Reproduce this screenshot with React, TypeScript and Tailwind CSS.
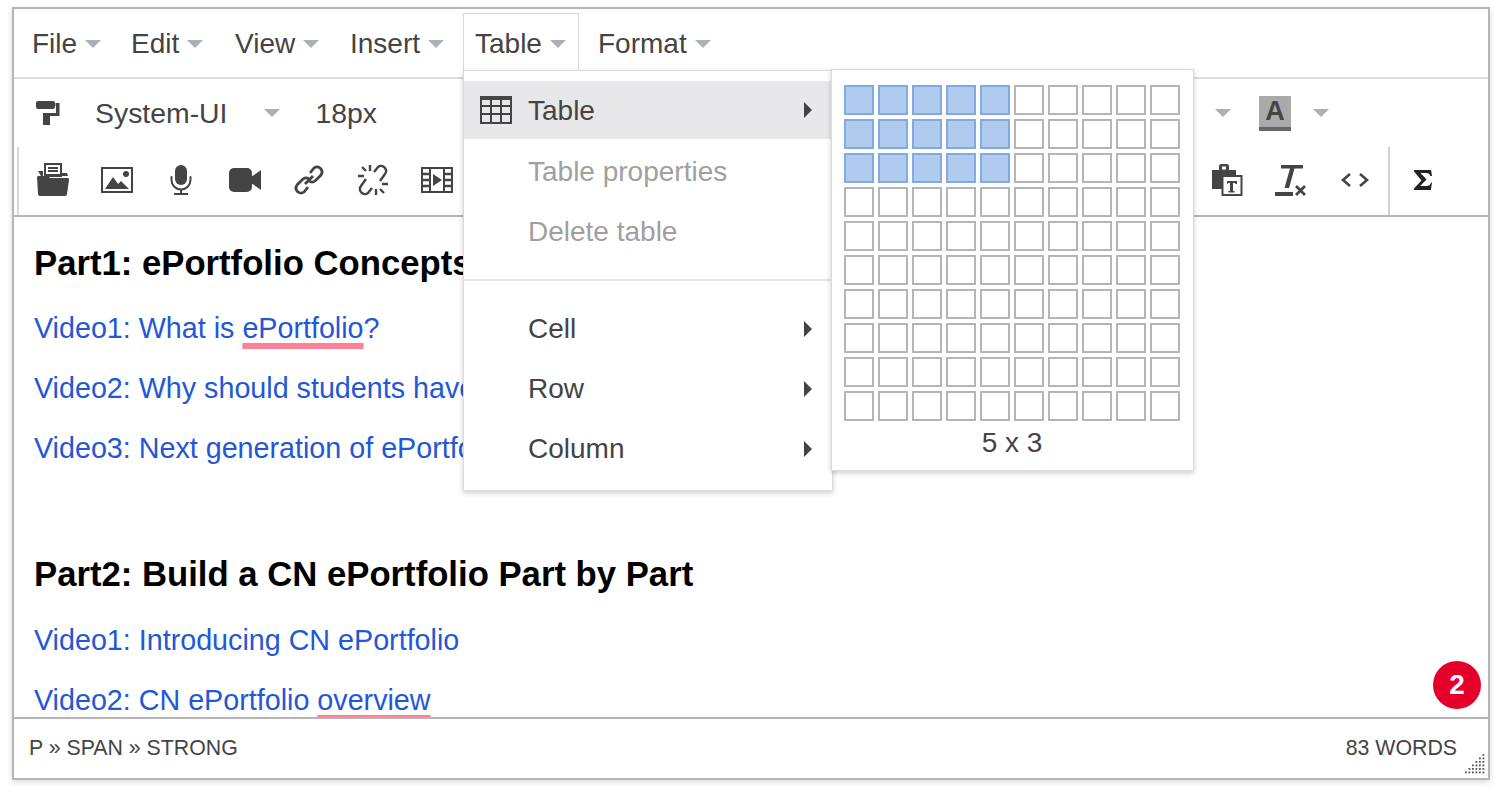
import React from "react";

const C = "#444444";
const font = { fontFamily: '"Liberation Sans", Arial, sans-serif' };

function Caret({ className = "" }: { className?: string }) {
  return (
    <svg width="16" height="8" viewBox="0 0 16 8" className={"shrink-0 " + className}>
      <path d="M0 0H16L8 8Z" fill="#a9b0b8" />
    </svg>
  );
}

function Arrow() {
  return (
    <svg width="8" height="16" viewBox="0 0 8 16" className="shrink-0">
      <path d="M0 0L8 8L0 16Z" fill="#444444" />
    </svg>
  );
}

function MenuBtn({ label, active, width }: { label: string; active?: boolean; width: string }) {
  return (
    <div
      className={
        "flex h-[64px] shrink-0 items-center gap-[8px] border-x border-t pb-[4px] pl-[11px] mr-[7px] " +
        width +
        " " +
        (active ? "border-[#d5d9dd] bg-white" : "border-transparent")
      }
    >
      <span>{label}</span>
      <Caret />
    </div>
  );
}

const Folder = () => (
  <svg width="34" height="34" viewBox="0 0 34 34">
    <path d="M9 1h16v11H9z" fill="none" stroke={C} strokeWidth="2" />
    <path d="M12 5h10M12 8h10" stroke={C} strokeWidth="2" />
    <path d="M2 8h5v6h19V10l5 0 1 3H6l-1 0z" fill={C} />
    <path d="M1 14c0-1 1-1 2-1h9l2 2h18c1 0 1 1 1 2l-2 14c0 1-1 2-2 2H4c-1 0-2-1-2-2z" fill={C} />
  </svg>
);
const ImageIcon = () => (
  <svg width="32" height="26" viewBox="0 0 32 26">
    <rect x="1" y="1" width="30" height="24" fill="none" stroke={C} strokeWidth="2" />
    <path d="M4 22l8-12 5 7 3-3 8 8z" fill={C} />
    <circle cx="25" cy="7" r="3" fill={C} />
  </svg>
);
const Mic = () => (
  <svg width="22" height="30" viewBox="0 0 22 30">
    <rect x="5" y="0" width="12" height="20" rx="6" fill={C} />
    <path d="M1.500 12v3a9.500 9.500 0 0 0 19 0v-3" fill="none" stroke={C} strokeWidth="2" strokeLinecap="round" />
    <path d="M11 24v4M4 29h14" stroke={C} strokeWidth="2" />
  </svg>
);
const Video = () => (
  <svg width="32" height="24" viewBox="0 0 32 24">
    <rect x="0" y="0" width="23" height="24" rx="5" fill={C} />
    <path d="M22 9l10-7v20l-10-7z" fill={C} />
  </svg>
);
const LinkIcon = () => (
  <svg width="32" height="32" viewBox="0 0 32 32" fill="none" stroke={C} strokeWidth="2.800">
    <path d="M12 20l8-8" />
    <path d="M17 9l4-5a5 5 0 0 1 6 0l1 1a5 5 0 0 1 0 6l-6 6a5 5 0 0 1-6 0" />
    <path d="M15 23l-4 5a5 5 0 0 1-6 0l-1-1a5 5 0 0 1 0-6l6-6a5 5 0 0 1 6 0" />
  </svg>
);
const Unlink = () => (
  <svg width="32" height="32" viewBox="0 0 32 32" fill="none" stroke={C} strokeWidth="2.400">
    <path d="M17 8l4-5a5 5 0 0 1 6 0l1 1a5 5 0 0 1 0 6l-5 7" />
    <path d="M15 24l-4 5a5 5 0 0 1-6 0l-1-1a5 5 0 0 1 0-6l5-7" />
    <path d="M13 1v6M1 12h6M5 3l4 4M19 31v-6M31 20h-6M27 29l-4-4" />
  </svg>
);
const Film = () => (
  <svg width="32" height="26" viewBox="0 0 32 26">
    <rect x="1" y="1" width="30" height="24" fill="none" stroke={C} strokeWidth="2" />
    <path d="M9 1v24M23 1v24" stroke={C} strokeWidth="2" />
    <path d="M1 7h8M1 13h8M1 19h8M23 7h8M23 13h8M23 19h8" stroke={C} strokeWidth="2.400" />
    <path d="M12 7l9 6-9 6z" fill={C} />
  </svg>
);
const Paint = () => (
  <svg width="24" height="24" viewBox="0 0 24 24">
    <rect x="0" y="0" width="19" height="8" rx="2" fill={C} />
    <path d="M19.500 2H23.500V15H14V24H7V12H20V5H19.500z" fill={C} />
  </svg>
);
const Paste = () => (
  <svg width="32" height="32" viewBox="0 0 32 32">
    <path d="M1 6h7V2c0-1 1-2 2-2h6c1 0 2 1 2 2v4h7v7H12v12H1z" fill={C} />
    <rect x="11" y="2.500" width="4" height="3" fill="white" />
    <rect x="11.500" y="12" width="19" height="19" fill="white" stroke={C} strokeWidth="2" />
    <path d="M16 17h10v3h-1.500l-.5-1h-2v8h1.500v1.500h-6V27H19v-8h-2l-.5 1H16z" fill={C} />
  </svg>
);
const ClearFormat = () => (
  <svg width="32" height="33" viewBox="0 0 32 33">
    <path d="M6 1h22v3.500h-8.500L14 24h-4.500L15 4.500H6z" fill={C} />
    <path d="M0 28h18v4H0z" fill={C} />
    <path d="M21 22l9 9M30 22l-9 9" stroke={C} strokeWidth="2.800" />
  </svg>
);
const Code = () => (
  <svg width="28" height="16" viewBox="0 0 28 16" fill="none" stroke={C} strokeWidth="2.600">
    <path d="M9 2L2 8l7 6M19 2l7 6-7 6" />
  </svg>
);
const Sigma = () => (
  <svg width="20" height="20" viewBox="0 0 20 20">
    <path d="M1 0h17l1 6h-1.500C16.500 3.500 15 3 12 3H7.500l6 6.500L7 16h6c3 0 4.500-1 5-3.500h1L17.800 20H1v-1.500l7.500-8L1 1.500z" fill="#222" />
  </svg>
);
const TableIcon = () => (
  <svg width="32" height="28" viewBox="0 0 32 28" className="shrink-0">
    <rect x="1" y="1" width="30" height="26" fill="none" stroke={C} strokeWidth="2" />
    <rect x="0" y="0" width="32" height="4" fill={C} />
    <path d="M11 2v24M21 2v24M1 10h30M1 18h30" stroke={C} strokeWidth="2" />
  </svg>
);
const gripDots: [number, number][] = [];
for (let row = 0; row < 6; row++) {
  for (let col = 5 - row; col < 6; col++) {
    gripDots.push([col * 3.5, row * 3.5]);
  }
}
const Grip = () => (
  <svg width="20" height="20" viewBox="0 0 20 20" fill="#555">
    {gripDots.map(([x, y], i) => (
      <rect key={i} x={x} y={y} width="1.800" height="1.800" />
    ))}
  </svg>
);

function Tool({ children }: { children: React.ReactNode }) {
  return <div className="flex h-[66px] w-16 shrink-0 items-center justify-center">{children}</div>;
}

function MenuRow({ label, disabled, submenu, active, icon }: { label: string; disabled?: boolean; submenu?: boolean; active?: boolean; icon?: React.ReactNode }) {
  return (
    <div className={"flex items-center pr-[20px] " + (active ? "mb-[3px] h-[58px] bg-[#e8e8ea]" : "h-[60px]")}>
      <div className="flex w-[64px] justify-center pr-px">{icon}</div>
      <span className={"flex-1 " + (active ? "pt-[2px] " : "") + (disabled ? "text-[#a0a0a0]" : "text-[#444444]")}>{label}</span>
      {submenu && <Arrow />}
    </div>
  );
}

function Para({ children }: { children: React.ReactNode }) {
  return <p className="mb-6 h-9 whitespace-nowrap text-[28.7px] leading-9 text-[#2257d6]">{children}</p>;
}

function Wavy({ children }: { children: React.ReactNode }) {
  return <span className="underline decoration-[#ff8099] decoration-[6px] underline-offset-[5px] [text-decoration-skip-ink:none]">{children}</span>;
}

export default function App() {
  const cells = Array.from({ length: 100 }, (_, i) => i);
  return (
    <div className="h-[792px] w-[1504px] overflow-hidden bg-white pl-3 pr-[14px] pt-[7px]" style={font}>
      <div className="relative flex h-[773px] w-[1478px] flex-col border-2 border-[#b5b5b5] bg-white text-[28px] text-[#444444] shadow-[0_2px_6px_rgba(0,0,0,0.15)]">
        {/* Menu bar */}
        <div className="flex h-[70px] shrink-0 items-end border-b-2 border-[#d8dcdf] pl-[6px]">
          <MenuBtn label="File" width="w-[92px]" />
          <MenuBtn label="Edit" width="w-[97px]" />
          <MenuBtn label="View" width="w-[108px]" />
          <MenuBtn label="Insert" width="w-[118px]" />
          <MenuBtn label="Table" width="w-[116px]" active />
          <MenuBtn label="Format" width="w-[130px]" />
        </div>

        {/* Toolbar row 1 */}
        <div className="flex h-[68px] shrink-0 items-center pl-[22px] text-[28.4px]">
          <Paint />
          <span className="ml-[35px] pt-px">System-UI</span>
          <Caret className="ml-[36px]" />
          <span className="ml-[36px] pt-px">18px</span>
          <div className="flex-1" />
          <Caret />
          <div className="ml-[28px] flex h-[35px] w-[32px] flex-col">
            <div className="flex h-[31px] items-center justify-center bg-[#aaaaaa] text-[27px] font-bold text-[#444444]">A</div>
            <div className="h-[4px] bg-[#666666]" />
          </div>
          <Caret className="ml-[22px]" />
          <div className="w-[159px]" />
        </div>

        {/* Toolbar row 2 */}
        <div className="flex h-[70px] shrink-0 border-b-2 border-[#b5b5b5] pl-[3px]">
          <div className="flex border-l-2 border-[#d8d8d8] pl-[2px]">
            <Tool><Folder /></Tool>
            <Tool><ImageIcon /></Tool>
            <Tool><Mic /></Tool>
            <Tool><Video /></Tool>
            <Tool><LinkIcon /></Tool>
            <Tool><Unlink /></Tool>
            <Tool><Film /></Tool>
          </div>
          <div className="flex-1" />
          <Tool><Paste /></Tool>
          <Tool><ClearFormat /></Tool>
          <Tool><Code /></Tool>
          <div className="ml-px border-l-2 border-[#d0d0d0] pl-px">
            <Tool><Sigma /></Tool>
          </div>
          <div className="w-[33px]" />
        </div>

        {/* Content */}
        <div className="relative flex-1 overflow-hidden pl-[20px] pt-[25px]">
          <h2 className="mb-[26px] h-[42px] whitespace-nowrap text-[34.7px] font-bold leading-[42px] text-black">Part1: ePortfolio Concepts</h2>
          <Para>Video1: What is <Wavy>ePortfolio</Wavy>?</Para>
          <Para>Video2: Why should students have</Para>
          <Para>Video3: Next generation of ePortfolio</Para>
          <div className="h-[36px]" />
          <h2 className="mb-[27px] mt-[27px] h-[42px] whitespace-nowrap text-[34.7px] font-bold leading-[42px] text-black">Part2: Build a CN ePortfolio Part by Part</h2>
          <Para>Video1: Introducing CN ePortfolio</Para>
          <Para>Video2: CN ePortfolio <Wavy>overview</Wavy></Para>
          <div className="absolute bottom-[8px] right-[7px] flex h-[48px] w-[48px] items-center justify-center rounded-full bg-[#e4002b] text-[28px] font-bold text-white">2</div>
        </div>

        {/* Status bar */}
        <div className="flex h-[61px] shrink-0 items-center border-t-2 border-[#b5b5b5] pl-[15px] pr-[31px] text-[21.3px]">
          <span className="flex-1">P » SPAN » STRONG</span>
          <span>83 WORDS</span>
          <div className="absolute bottom-[4px] right-[3px]"><Grip /></div>
        </div>

        {/* Table menu */}
        <div className="absolute left-[449px] top-[61px] h-[421px] w-[370px] border border-[#d8dcdf] bg-white pt-[10px] shadow-[0_2px_5px_rgba(0,0,0,0.2)]">
          <MenuRow label="Table" active submenu icon={<TableIcon />} />
          <MenuRow label="Table properties" disabled />
          <MenuRow label="Delete table" disabled />
          <div className="mb-[18px] mt-[17px] border-t-2 border-[#e4e4e4]" />
          <MenuRow label="Cell" submenu />
          <MenuRow label="Row" submenu />
          <MenuRow label="Column" submenu />
        </div>

        {/* Grid submenu */}
        <div className="absolute left-[817px] top-[60px] h-[402px] w-[363px] border border-[#d8dcdf] bg-white pl-[12px] pt-[15px] shadow-[0_2px_5px_rgba(0,0,0,0.2)]">
          <div className="grid w-[336px] grid-cols-[repeat(10,30px)] gap-[4px]">
            {cells.map((i) =>
              i % 10 < 5 && i < 30 ? (
                <div key={i} className="h-[30px] w-[30px] border-2 border-[#7fabe0] bg-[#b0cbed]" />
              ) : (
                <div key={i} className="h-[30px] w-[30px] border-2 border-[#b5b5b5]" />
              )
            )}
          </div>
          <div className="mt-[4px] w-[336px] text-center leading-[36px]">5 x 3</div>
        </div>
      </div>
    </div>
  );
}
